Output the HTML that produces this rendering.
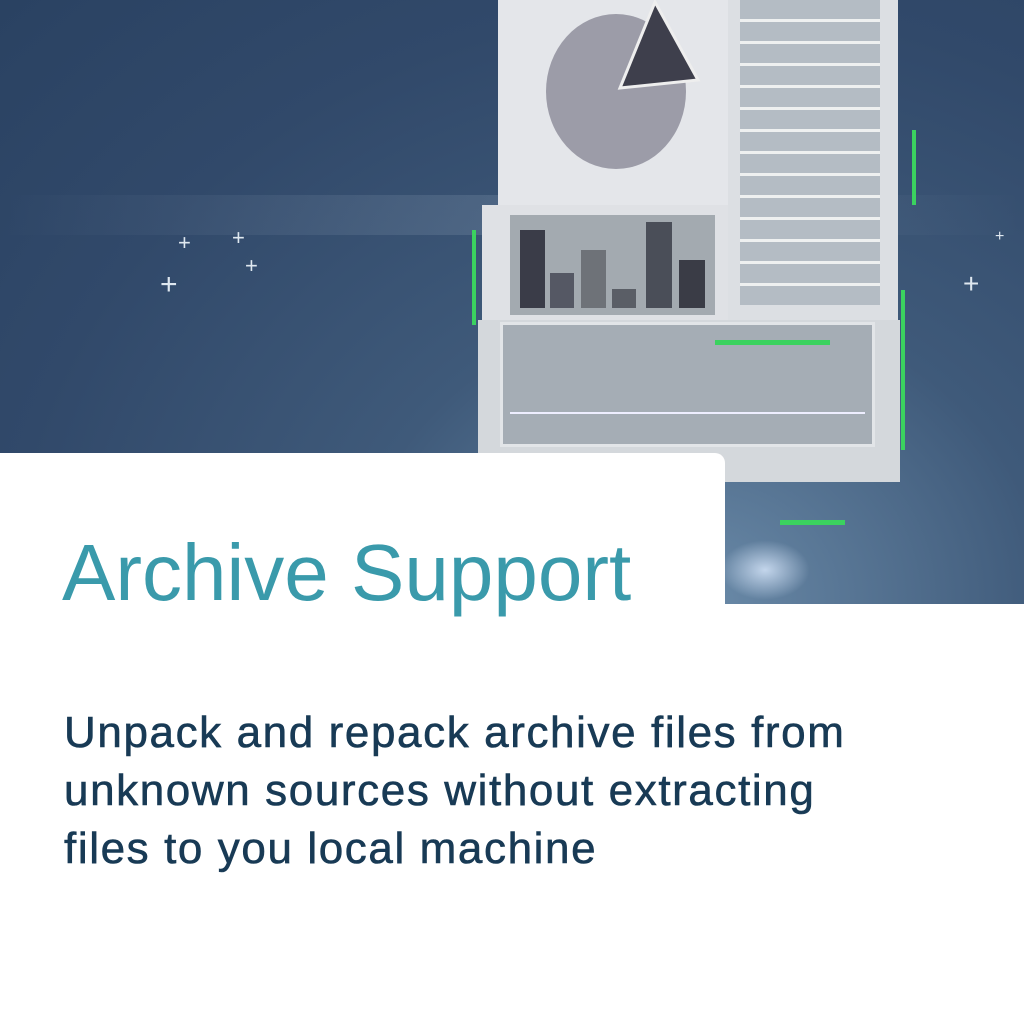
<!DOCTYPE html>
<html><head><meta charset="utf-8"><style>
body{margin:0;width:1024px;height:1024px;overflow:hidden;background:#fff;font-family:"Liberation Sans",sans-serif;position:relative}
.bg{position:absolute;left:0;top:0;width:1024px;height:604px;background:radial-gradient(ellipse at 700px 600px,#6a8aa8 0%,#3f5a7a 35%,#31496a 70%,#2a4262 100%);overflow:hidden}
.a{position:absolute}
.card{position:absolute;left:0;top:453px;width:725px;height:200px;background:#fff;border-top-right-radius:10px}
h1{position:absolute;left:62px;top:527px;margin:0;font-weight:normal;font-size:80px;color:#3a9aab;white-space:nowrap}
p{position:absolute;left:64px;top:704px;margin:0;font-size:44px;line-height:58px;letter-spacing:1.6px;color:#183a55;white-space:nowrap;-webkit-text-stroke:0.6px #183a55}
.dot{position:absolute;color:#dfe8f0;font-size:22px}
</style></head><body>
<div class="bg">
 <div class="a" style="left:0;top:195px;width:1024px;height:40px;background:linear-gradient(90deg,transparent,rgba(200,215,230,.15),transparent)"></div>
 <span class="dot" style="left:160px;top:268px;font-size:30px">+</span>
 <span class="dot" style="left:178px;top:230px">+</span>
 <span class="dot" style="left:245px;top:253px">+</span>
 <span class="dot" style="left:232px;top:225px">+</span>
 <span class="dot" style="left:963px;top:268px;font-size:28px">+</span>
 <span class="dot" style="left:995px;top:228px;font-size:16px">+</span>
 <div class="a" style="left:498px;top:0;width:235px;height:205px;background:#e4e6ea"></div>
 <div class="a" style="left:546px;top:14px;width:140px;height:155px;border-radius:50%;background:#9c9ca8"></div>
 <svg class="a" style="left:610px;top:0" width="95" height="95"><polygon points="10,88 45,2 88,80" fill="#3e3f4c" stroke="#eee" stroke-width="3"/></svg>
 <div class="a" style="left:482px;top:205px;width:250px;height:120px;background:#dfe1e5"></div>
 <div class="a" style="left:510px;top:215px;width:205px;height:100px;background:#a3aab0"></div>
 <div class="a" style="left:520px;top:230px;width:25px;height:78px;background:#3a3c48"></div>
 <div class="a" style="left:550px;top:273px;width:24px;height:35px;background:#555864"></div>
 <div class="a" style="left:581px;top:250px;width:25px;height:58px;background:#6e7278"></div>
 <div class="a" style="left:612px;top:289px;width:24px;height:19px;background:#5a5e66"></div>
 <div class="a" style="left:646px;top:222px;width:26px;height:86px;background:#4a4e58"></div>
 <div class="a" style="left:679px;top:260px;width:26px;height:48px;background:#3a3c46"></div>
 <div class="a" style="left:728px;top:0;width:170px;height:320px;background:#dcdfe3"></div>
 <div class="a" style="left:740px;top:0;width:140px;height:305px;background:repeating-linear-gradient(180deg,#b4bcc4 0 19px,#eef0f0 19px 22px)"></div>
 <div class="a" style="left:478px;top:320px;width:422px;height:162px;background:#d4d8dc"></div>
 <div class="a" style="left:500px;top:322px;width:375px;height:125px;background:#a5adb5;border:3px solid #e2e5e8;box-sizing:border-box"></div>
 <div class="a" style="left:510px;top:412px;width:355px;height:2px;background:#eef"></div>
 <div class="a" style="left:912px;top:130px;width:4px;height:75px;background:#3bd25f"></div>
 <div class="a" style="left:472px;top:230px;width:4px;height:95px;background:#3bd25f"></div>
 <div class="a" style="left:715px;top:340px;width:115px;height:5px;background:#3bd25f"></div>
 <div class="a" style="left:780px;top:520px;width:65px;height:5px;background:#3bd25f"></div>
 <div class="a" style="left:901px;top:290px;width:4px;height:160px;background:#3bd25f"></div>
 <div class="a" style="left:720px;top:540px;width:90px;height:60px;background:radial-gradient(ellipse,rgba(220,235,255,.8),transparent 70%)"></div>
</div>
<div class="card"></div>
<h1>Archive Support</h1>
<p>Unpack and repack archive files from<br>unknown sources without extracting<br>files to you local machine</p>
</body></html>
